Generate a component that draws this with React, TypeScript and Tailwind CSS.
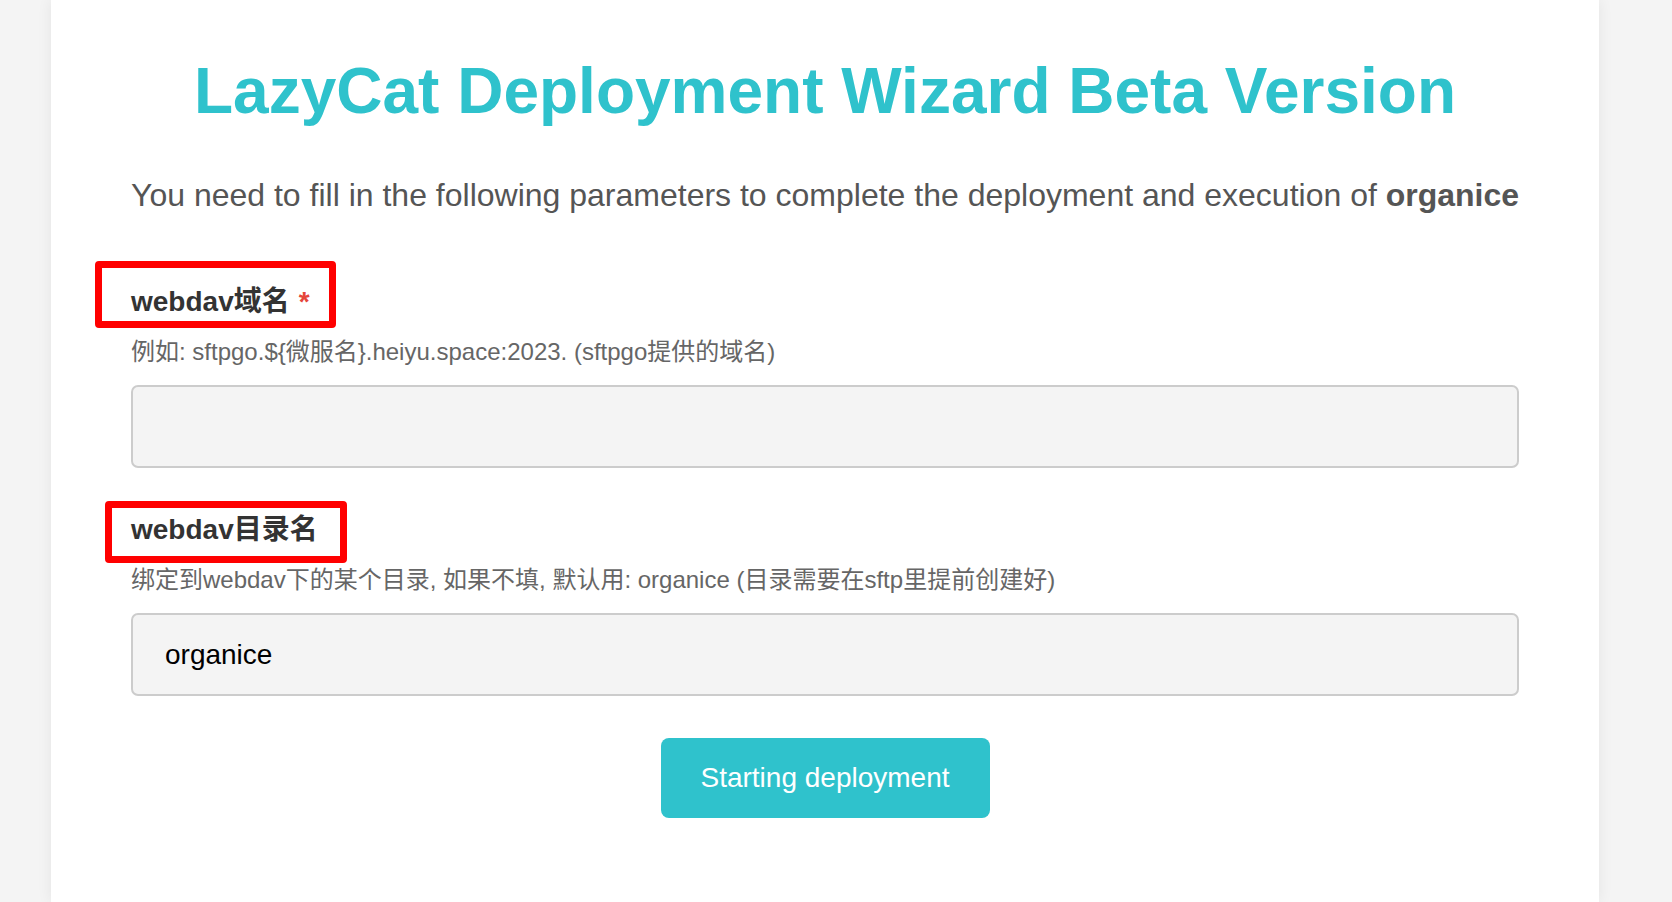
import React, { useState } from 'react';

type FieldProps = {
  label: string;
  hint: string;
  required?: boolean;
  value: string;
  onChange: (v: string) => void;
  marker: string;
};

const Field = ({ label, hint, required, value, onChange, marker }: FieldProps) => {
  return (
    <div className="flex flex-col">
      <div className="relative">
        {/* red annotation box drawn over the label */}
        <div className={marker} />
        <label className="relative block text-[28px] leading-[40px] font-bold text-[#333]">
          {label}
          {required && <span className="ml-[9px] text-[#e5463b]">*</span>}
        </label>
      </div>
      <p className="mt-[13px] text-[24px] leading-[34px] text-[#666]">{hint}</p>
      <input
        className="mt-[16px] h-[83px] w-full rounded-[7px] border-2 border-[#cccccc] bg-[#f4f4f4] px-8 text-[28px] text-black outline-none"
        value={value}
        onChange={(e) => onChange(e.target.value)}
      />
    </div>
  );
};

export default function App() {
  const [domain, setDomain] = useState('');
  const [dir, setDir] = useState('organice');

  return (
    <div
      className="flex min-h-[902px] justify-center bg-[#f4f4f4]"
      style={{ fontFamily: '"Liberation Sans", "Noto Sans CJK SC", Arial, sans-serif' }}
    >
      <section className="ml-[51px] mr-[73px] flex w-[1548px] flex-col bg-white px-20 pt-[59px] shadow-[0_0_14px_rgba(0,0,0,0.07)]">
        <h1 className="text-center text-[64px] leading-[64px] font-bold text-[#2fc2cc]">
          LazyCat Deployment Wizard Beta Version
        </h1>
        <p className="mt-[49px] whitespace-nowrap text-[32px] leading-[46px] text-[#555]">
          You need to fill in the following parameters to complete the deployment and execution of{' '}
          <b>organice</b>
        </p>

        <div className="mt-[64px]">
          <Field
            label="webdav域名"
            hint="例如: sftpgo.${微服名}.heiyu.space:2023. (sftpgo提供的域名)"
            required
            value={domain}
            onChange={setDomain}
            marker="absolute left-[-36px] top-[-21px] h-[67px] w-[241px] rounded-[4px] border-[7px] border-[#ff0000]"
          />
        </div>

        <div className="mt-[42px]">
          <Field
            label="webdav目录名"
            hint="绑定到webdav下的某个目录, 如果不填, 默认用: organice (目录需要在sftp里提前创建好)"
            value={dir}
            onChange={setDir}
            marker="absolute left-[-26px] top-[-9px] h-[62px] w-[242px] rounded-[4px] border-[7px] border-[#ff0000]"
          />
        </div>

        <div className="mt-[42px] flex justify-center">
          <button className="h-[80px] w-[329px] rounded-[8px] bg-[#2fc2cc] text-[28px] text-white">
            Starting deployment
          </button>
        </div>
      </section>
    </div>
  );
}
